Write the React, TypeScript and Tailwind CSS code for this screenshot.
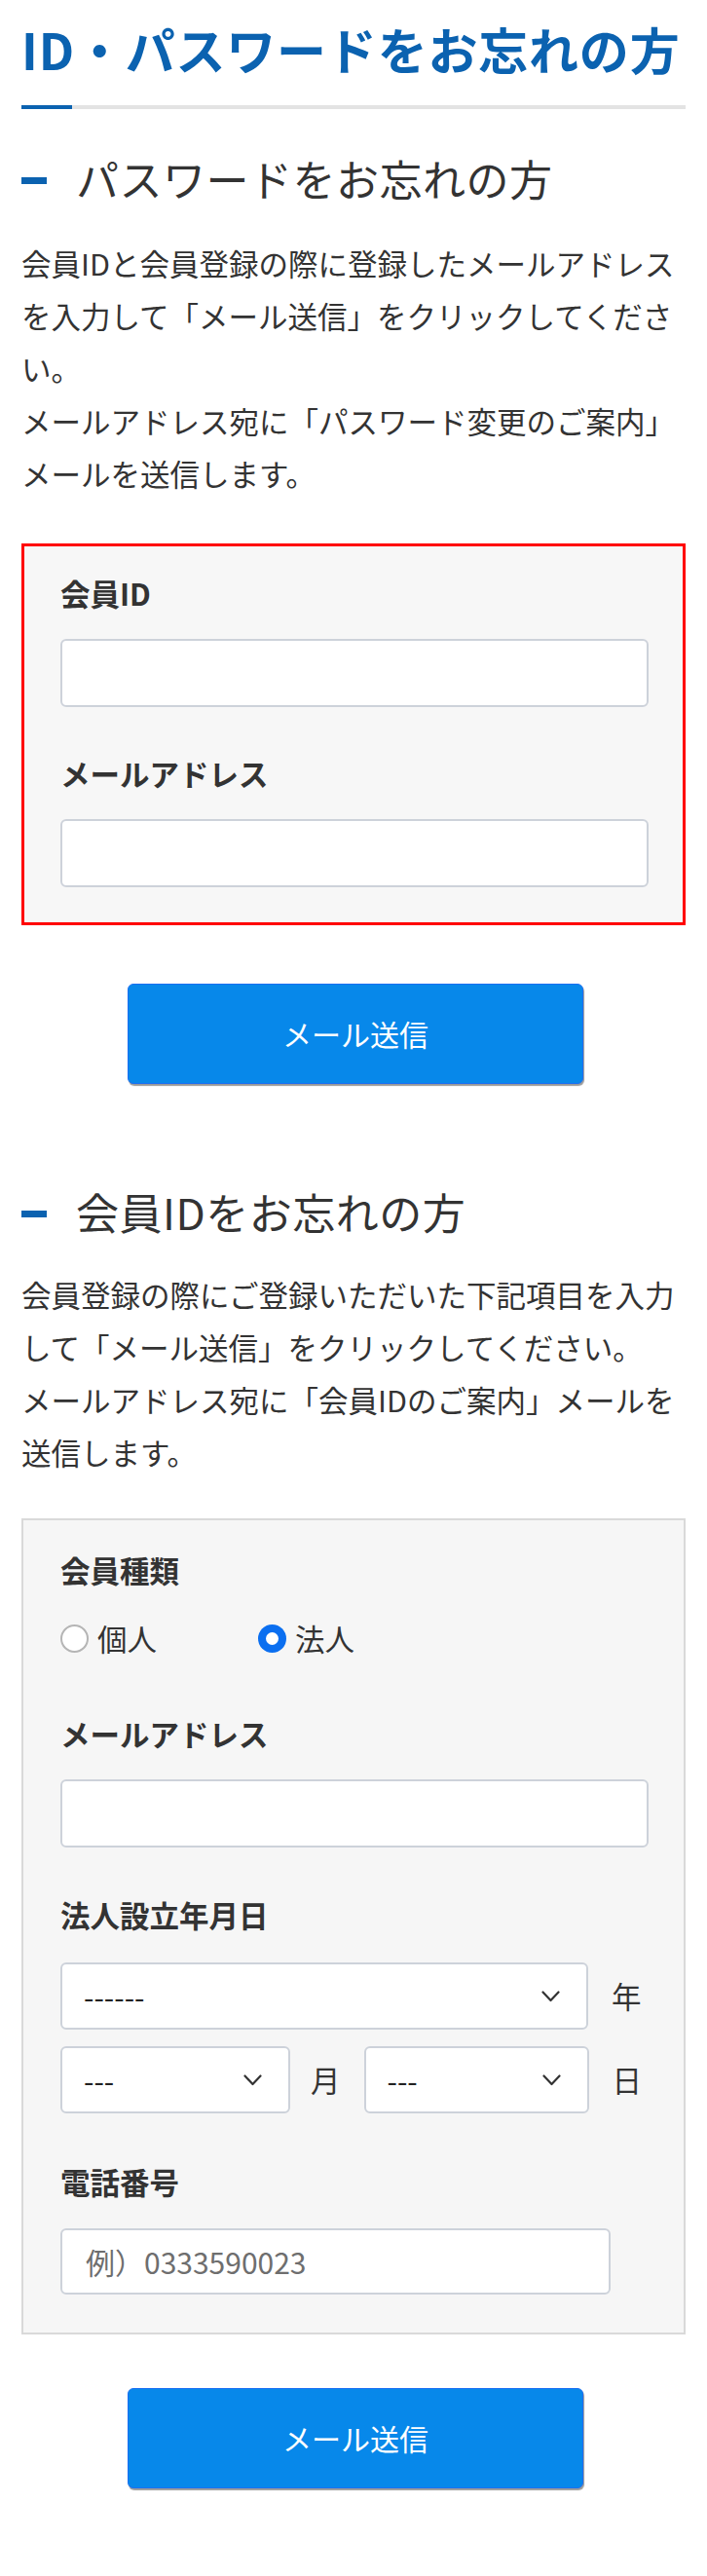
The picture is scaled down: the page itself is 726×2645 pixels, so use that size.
import React from 'react';

const blue = 'bg-[#0b62b0]';

const SectionTitle: React.FC<{ children: React.ReactNode; className?: string }> = ({ children, className = '' }) => (
  <div className={`flex items-center ${className}`}>
    <span className={`mt-[5px] h-[7px] w-[26px] shrink-0 ${blue}`} />
    <h2 className="ml-[30px] text-[44px] font-normal leading-[62px] tracking-[0.5px] text-[#333]">{children}</h2>
  </div>
);

const FieldLabel: React.FC<{ children: React.ReactNode; className?: string }> = ({ children, className = '' }) => (
  <p className={`text-[30.5px] font-bold leading-[54px] text-[#333] ${className}`}>{children}</p>
);

const TextInput: React.FC<{ className?: string; placeholder?: string }> = ({ className = 'w-full h-[70px]', placeholder }) => (
  <input
    type="text"
    placeholder={placeholder}
    className={`block rounded-[6px] border-2 border-[#cdd2da] bg-white pl-[24px] text-[30px] text-[#333] outline-none placeholder:text-[#6e6e6e] ${className}`}
  />
);

const Chevron = () => (
  <svg
    width="19"
    height="12"
    viewBox="0 0 19 12"
    className="pointer-events-none absolute right-[29px] top-1/2 -translate-y-1/2"
  >
    <polyline points="1.5,1.5 9.5,10 17.5,1.5" fill="none" stroke="#333" strokeWidth="2.2" strokeLinecap="round" strokeLinejoin="round" />
  </svg>
);

const Select: React.FC<{ width: string; value: string }> = ({ width, value }) => (
  <div className={`relative ${width}`}>
    <select className="block h-[69px] w-full appearance-none rounded-[6px] border-2 border-[#cdd2da] bg-white pl-[22px] text-[30px] text-[#222] outline-none">
      <option>{value}</option>
    </select>
    <Chevron />
  </div>
);

const SubmitButton: React.FC<{ className?: string }> = ({ className = '' }) => (
  <button
    type="button"
    className={`ml-[109px] block h-[103px] w-[468px] rounded-[6px] border border-[#1b6ff2] bg-[#0788ea] text-[30px] text-white shadow-[1px_2px_1px_rgba(0,0,0,0.4)] ${className}`}
  >
    メール送信
  </button>
);

export default function App() {
  return (
    <div className="min-h-[2645px] bg-white px-[22px] pb-[89px] pt-[15px] font-['Noto_Sans_CJK_JP',sans-serif] text-[#333]">
      {/* page title */}
      <h1 className="text-[51px] font-bold leading-[71px] tracking-[0.8px] text-[#0b62b0]">ID・パスワードをお忘れの方</h1>
      <div className="mt-[22px] flex h-[4px]">
        <div className={`w-[52px] ${blue}`} />
        <div className="flex-1 bg-[#e3e3e3]" />
      </div>

      {/* password */}
      <SectionTitle className="mt-[40px]">パスワードをお忘れの方</SectionTitle>
      <p className="mt-[29px] text-[30.5px] leading-[54px]">
        会員IDと会員登録の際に登録したメールアドレスを入力して「メール送信」をクリックしてください。
        <br />
        メールアドレス宛に「パスワード変更のご案内」メールを送信します。
      </p>

      <div className="mt-[45px] border-[3px] border-[#ff0000] bg-[#f7f7f7] pb-[36px] pl-[37px] pr-[35px] pt-[21px]">
        <FieldLabel>会員ID</FieldLabel>
        <TextInput className="mt-[20px] h-[70px] w-full" />
        <FieldLabel className="mt-[41px]">メールアドレス</FieldLabel>
        <TextInput className="mt-[20px] h-[70px] w-full" />
      </div>

      <SubmitButton className="mt-[60px]" />

      {/* member id */}
      <SectionTitle className="mt-[100px]">会員IDをお忘れの方</SectionTitle>
      <p className="mt-[27px] text-[30.5px] leading-[54px]">
        会員登録の際にご登録いただいた下記項目を入力して「メール送信」をクリックしてください。
        <br />
        メールアドレス宛に「会員IDのご案内」メールを送信します。
      </p>

      <div className="mt-[41px] border-2 border-[#d9d9d9] bg-[#f6f6f6] pb-[39px] pl-[38px] pr-[36px] pt-[24px]">
        <FieldLabel>会員種類</FieldLabel>
        <div className="mt-[16px] flex items-center text-[30.5px] leading-[54px]">
          <label className="flex w-[203px] items-center">
            <span className="h-[29px] w-[29px] rounded-full border-2 border-[#b5b5b5] bg-white" />
            <span className="ml-[9px]">個人</span>
          </label>
          <label className="flex items-center">
            <span className="flex h-[29px] w-[29px] items-center justify-center rounded-full bg-[#0b6ff0]">
              <span className="h-[13px] w-[13px] rounded-full bg-white" />
            </span>
            <span className="ml-[9px]">法人</span>
          </label>
        </div>

        <FieldLabel className="mt-[44px]">メールアドレス</FieldLabel>
        <TextInput className="mt-[20px] h-[70px] w-full" />

        <FieldLabel className="mt-[42px]">法人設立年月日</FieldLabel>
        <div className="mt-[22px] flex items-center">
          <Select width="w-[542px]" value="------" />
          <span className="ml-[24px] text-[30.5px]">年</span>
        </div>
        <div className="mt-[17px] flex items-center">
          <Select width="w-[236px]" value="---" />
          <span className="ml-[21px] text-[30.5px]">月</span>
          <div className="ml-[24px]">
            <Select width="w-[231px]" value="---" />
          </div>
          <span className="ml-[24px] text-[30.5px]">日</span>
        </div>

        <FieldLabel className="mt-[43px]">電話番号</FieldLabel>
        <TextInput className="mt-[21px] h-[68px] w-[565px]" placeholder="例）0333590023" />
      </div>

      <SubmitButton className="mt-[55px]" />
    </div>
  );
}
